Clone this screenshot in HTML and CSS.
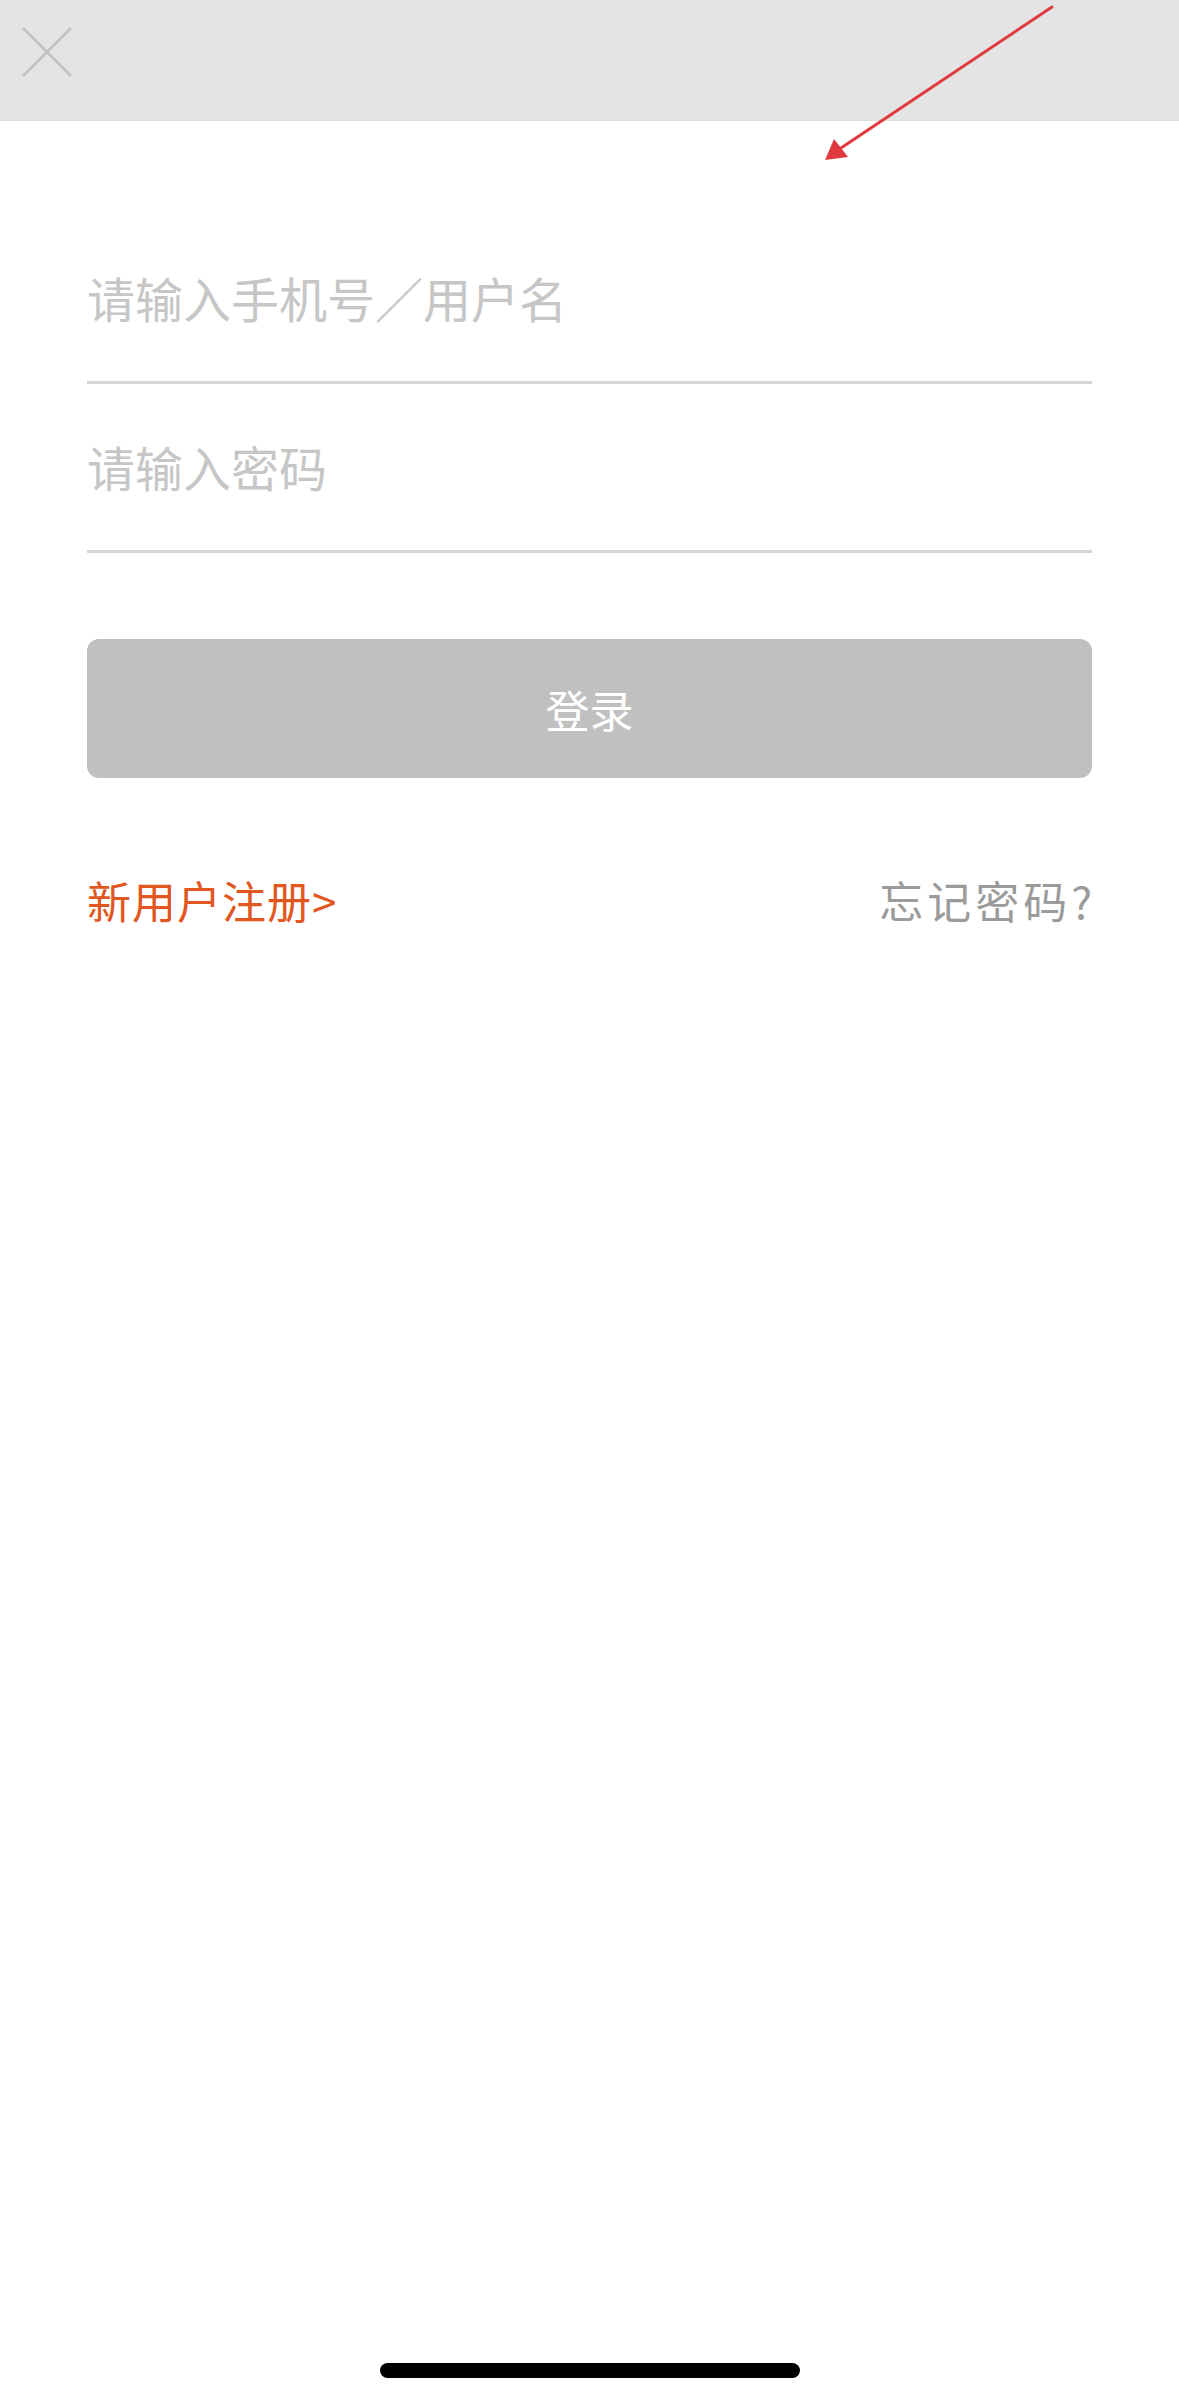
FILE: index.html
```html
<!DOCTYPE html>
<html lang="zh-CN">
<head>
<meta charset="utf-8">
<title>登录</title>
<link rel="stylesheet" href="styles.css">
</head>
<body>
<div class="screen">
  <header class="topbar">
    <svg class="close" width="50" height="50" viewBox="0 0 50 50" aria-label="关闭">
      <path d="M2 2 L48 48 M48 2 L2 48" stroke="#c3c3c3" stroke-width="3" stroke-linecap="round" fill="none"/>
    </svg>
  </header>

  <main class="form">
    <div class="field first"><span class="ph">请输入手机号／用户名</span></div>
    <div class="field"><span class="ph">请输入密码</span></div>
    <div class="btn">登录</div>
    <div class="links">
      <span class="reg">新用户注册&gt;</span>
      <span class="forgot">忘记密码?</span>
    </div>
  </main>

  <svg class="arrow" width="1179" height="200" viewBox="0 0 1179 200">
    <line x1="1052" y1="7" x2="838" y2="150" stroke="#e03a3e" stroke-width="3" stroke-linecap="round"/>
    <polygon points="825,160 834,139 848,157" fill="#e03a3e"/>
  </svg>

  <div class="home"></div>
</div>
</body>
</html>
```

FILE: styles.css
```css
html, body {
  margin: 0;
  padding: 0;
  background: #ffffff;
}

.screen {
  position: relative;
  width: 1179px;
  height: 2401px;
  overflow: hidden;
  font-family: "Noto Sans CJK SC", "Noto Sans", sans-serif;
  font-weight: 400;
}

.topbar {
  height: 121px;
  background: #e4e4e4;
  border-bottom: 1px solid #dcdcdc;
  display: flex;
  align-items: flex-start;
  padding-left: 22px;
  padding-top: 27px;
  box-sizing: border-box;
}

.close {
  display: block;
}

.form {
  padding: 0 87px;
  display: flex;
  flex-direction: column;
}

.field {
  padding-bottom: 60px;
  border-bottom: 3px solid #d6d6d6;
  font-size: 48px;
  line-height: 48px;
  margin-top: 58px;
}

.field.first {
  margin-top: 152px;
}

.ph {
  color: #c6c6c6;
  display: block;
}

.btn {
  margin-top: 86px;
  height: 139px;
  border-radius: 12px;
  background: #c0c0c0;
  color: #ffffff;
  font-size: 44px;
  display: flex;
  align-items: center;
  justify-content: center;
}

.links {
  margin-top: 99px;
  display: flex;
  justify-content: space-between;
  align-items: center;
  font-size: 44px;
  line-height: 46px;
}

.reg {
  color: #e2561f;
  letter-spacing: 1px;
}

.forgot {
  color: #9b9b9b;
  letter-spacing: 4px;
  margin-right: -4px;
}

.arrow {
  position: absolute;
  left: 0;
  top: 0;
  pointer-events: none;
}

.home {
  position: absolute;
  left: 380px;
  top: 2363px;
  width: 420px;
  height: 15px;
  border-radius: 8px;
  background: #000000;
}
```
